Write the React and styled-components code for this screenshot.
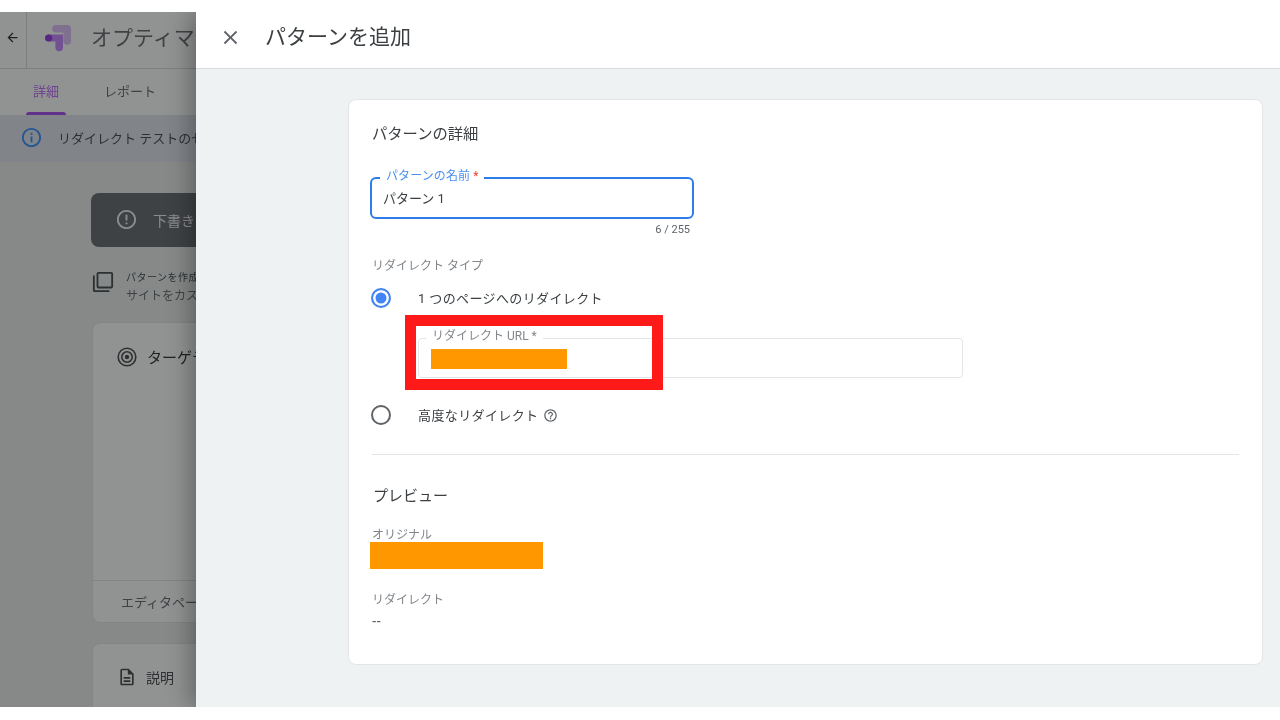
import styled, { createGlobalStyle } from "styled-components";
import {
  MdArrowBack,
  MdClose,
  MdInfoOutline,
  MdErrorOutline,
  MdFilterNone,
  MdOutlineDescription,
  MdHelpOutline,
} from "react-icons/md";

const GlobalStyle = createGlobalStyle`
  html, body {
    margin: 0;
    padding: 0;
    background: #fff;
  }
  body {
    font-family: Roboto, "Noto Sans CJK JP", sans-serif;
    color: #3c4043;
  }
  * {
    box-sizing: border-box;
  }
`;

const App = () => {
  return (
    <Slide>
      <GlobalStyle />
      <Screen>
        <BackPage>
          <TopBar>
            <BackCell>
              <MdArrowBack size={15} />
            </BackCell>
            <Logo />
            <ProductTitle>オプティマイズ</ProductTitle>
          </TopBar>
          <Tabs>
            <Tab $active>詳細</Tab>
            <Tab>レポート</Tab>
          </Tabs>
          <Banner>
            <MdInfoOutline size={23} color="#2a8aff" />
            <span>リダイレクト テストのセットアップ</span>
          </Banner>
          <BackContent>
            <DraftCard>
              <MdErrorOutline size={23} />
              <span>下書きです</span>
            </DraftCard>
            <HintRow>
              <MdFilterNone size={22} />
              <HintText>
                <b>パターンを作成してください</b>
                <span>サイトをカスタマイズします</span>
              </HintText>
            </HintRow>
            <TargetCard>
              <CardHead>
                <TargetIcon />
                <span>ターゲティング</span>
              </CardHead>
              <CardFooter>エディタページ</CardFooter>
            </TargetCard>
            <NoteCard>
              <MdOutlineDescription size={20} />
              <span>説明</span>
            </NoteCard>
          </BackContent>
          <Scrim />
        </BackPage>

        <Panel>
          <PanelHeader>
            <CloseButton>
              <MdClose size={23} />
            </CloseButton>
            <PanelTitle>パターンを追加</PanelTitle>
          </PanelHeader>
          <PanelBody>
            <Card>
              <SectionTitle>パターンの詳細</SectionTitle>
              <NameField>
                <NameLabel>
                  パターンの名前 <Required>*</Required>
                </NameLabel>
                パターン 1
              </NameField>
              <Counter>6 / 255</Counter>
              <FieldCaption>リダイレクト タイプ</FieldCaption>
              <RadioRow>
                <Radio $checked />
                <RadioText>1 つのページへのリダイレクト</RadioText>
              </RadioRow>
              <UrlField>
                <UrlLabel>リダイレクト URL *</UrlLabel>
                <UrlValue />
                <Highlight />
              </UrlField>
              <RadioRow $second>
                <Radio />
                <RadioText>高度なリダイレクト</RadioText>
                <MdHelpOutline size={15} color="#5f6368" />
              </RadioRow>
              <Divider />
              <PreviewTitle>プレビュー</PreviewTitle>
              <PreviewLabel>オリジナル</PreviewLabel>
              <OriginalValue />
              <PreviewLabel $gap>リダイレクト</PreviewLabel>
              <EmptyValue>--</EmptyValue>
            </Card>
          </PanelBody>
        </Panel>
      </Screen>
    </Slide>
  );
};

const Logo = () => (
  <LogoSvg width="27" height="27" viewBox="0 0 27 27">
    <path
      fill="#dcbcfa"
      d="M11 0H22a4 4 0 0 1 4 4V16a3.8 3.8 0 0 1-7.6 0V7.6H11a3.8 3.8 0 0 1 0-7.6z"
    />
    <path
      fill="#c080ff"
      d="M3.6 9.4H18V22.4a3.8 3.8 0 0 1-7.6 0V16.6H3.6z"
    />
    <circle cx="3.6" cy="13" r="3.6" fill="#8a2be2" />
  </LogoSvg>
);

const TargetIcon = () => (
  <svg width="20" height="20" viewBox="0 0 20 20" fill="none" stroke="#3c4043">
    <circle cx="10" cy="10" r="8.8" strokeWidth="1.6" />
    <circle cx="10" cy="10" r="5.2" strokeWidth="1.6" />
    <circle cx="10" cy="10" r="2.2" fill="#3c4043" strokeWidth="0" />
  </svg>
);

const Slide = styled.div`
  width: 1280px;
  height: 720px;
  padding: 12px 0 13px;
  background: #fff;
  overflow: hidden;
  filter: blur(0.5px);
`;

const Screen = styled.div`
  display: flex;
  height: 695px;
  overflow: hidden;
`;

const BackPage = styled.div`
  position: relative;
  flex: 0 0 196px;
  overflow: hidden;
  background: #ebeeee;
  white-space: nowrap;

  svg {
    flex: none;
  }
`;

const Scrim = styled.div`
  position: absolute;
  inset: 0;
  background: rgba(30, 32, 32, 0.49);
`;

const TopBar = styled.div`
  display: flex;
  align-items: center;
  height: 57px;
  padding-bottom: 6px;
  background: #fff;
  border-bottom: 1px solid #d6d8da;
`;

const BackCell = styled.div`
  display: flex;
  align-items: center;
  justify-content: center;
  flex: 0 0 27px;
  height: 57px;
  margin-top: 6px;
  padding: 0 2px 6px 0;
  border-right: 1px solid #d6d8da;
  color: #202124;
`;

const LogoSvg = styled.svg`
  margin: 2px 0 0 18px;
`;

const ProductTitle = styled.div`
  margin: 0 0 2px 19px;
  font-size: 21px;
  color: #5f6368;
`;

const Tabs = styled.div`
  display: flex;
  height: 46px;
  gap: 45px;
  padding-left: 33px;
  background: #fff;
`;

const Tab = styled.div`
  position: relative;
  padding-top: 12px;
  font-size: 13px;
  color: ${(p) => (p.$active ? "#bb66ff" : "#5f6368")};

  &::after {
    content: "";
    display: ${(p) => (p.$active ? "block" : "none")};
    position: absolute;
    left: -7px;
    right: -7px;
    bottom: 0;
    height: 3px;
    border-radius: 3px 3px 0 0;
    background: #a142f4;
  }
`;

const Banner = styled.div`
  display: flex;
  align-items: center;
  gap: 15px;
  height: 47px;
  padding: 0 0 2px 20px;
  background: #dfe6f0;
  font-size: 13px;
  color: #3c4043;
`;

const BackContent = styled.div`
  padding: 31px 0 0 91px;
  width: 700px;
`;

const DraftCard = styled.div`
  display: flex;
  align-items: center;
  gap: 15px;
  height: 54px;
  padding: 0 0 1px 24px;
  border-radius: 8px;
  background: #5f6368;
  color: #f1f3f4;
  font-size: 14px;
`;

const HintRow = styled.div`
  display: flex;
  align-items: flex-start;
  gap: 12px;
  margin: 22px 0 17px 1px;
  color: #3c4043;

  svg {
    margin-top: 2px;
  }
`;

const HintText = styled.div`
  display: flex;
  flex-direction: column;
  font-size: 12px;
  line-height: 18px;
  color: #5f6368;

  b {
    font-size: 10px;
    font-weight: 400;
    letter-spacing: 0.5px;
    color: #3c4043;
  }
`;

const BackCard = styled.div`
  border: 1px solid #e2e4e6;
  border-radius: 8px;
  background: #fff;
  margin-left: 1px;
`;

const TargetCard = styled(BackCard)`
  display: flex;
  flex-direction: column;
  justify-content: space-between;
  height: 301px;
`;

const CardHead = styled.div`
  display: flex;
  align-items: center;
  gap: 10px;
  padding: 23px 0 0 24px;
  font-size: 15px;
  color: #202124;
`;

const CardFooter = styled.div`
  display: flex;
  align-items: center;
  height: 42px;
  padding-left: 28px;
  border-top: 1px solid #e2e4e6;
  font-size: 13px;
  color: #5f6368;
`;

const NoteCard = styled(BackCard)`
  display: flex;
  align-items: flex-start;
  gap: 9px;
  height: 90px;
  margin-top: 20px;
  padding: 23px 0 0 24px;
  font-size: 14px;
  color: #3c4043;
`;

const Panel = styled.div`
  position: relative;
  display: flex;
  flex-direction: column;
  flex: 1;
  min-width: 0;
  box-shadow: -6px 0 22px rgba(0, 0, 0, 0.3);
`;

const PanelHeader = styled.div`
  display: flex;
  align-items: center;
  flex: 0 0 57px;
  padding: 0 0 10px 23px;
  background: #fff;
  border-bottom: 1px solid #dadce0;
`;

const CloseButton = styled.div`
  display: flex;
  margin-top: 4px;
  color: #5f6368;
`;

const PanelTitle = styled.h1`
  margin: 0 0 0 23px;
  font-size: 21px;
  font-weight: 400;
  color: #3c4043;
`;

const PanelBody = styled.div`
  flex: 1;
  padding: 30px 17px 0 152px;
  background: #eff2f3;
`;

const Card = styled.div`
  height: 566px;
  padding: 23px 23px 0;
  border: 1px solid #e3e5e8;
  border-radius: 8px;
  background: #fff;
`;

const SectionTitle = styled.h2`
  margin: 0;
  height: 22px;
  line-height: 22px;
  font-size: 15.3px;
  font-weight: 400;
  color: #3c4043;
`;

const NameField = styled.div`
  position: relative;
  display: flex;
  align-items: center;
  width: 324px;
  height: 42px;
  margin: 32px 0 0 -2px;
  padding: 0 0 2px 11px;
  border: 2px solid #2b7de9;
  border-radius: 6px;
  font-size: 13px;
  color: #3c4043;
`;

const NameLabel = styled.label`
  position: absolute;
  left: 8px;
  top: -11px;
  padding: 0 6px 0 6px;
  background: #fff;
  line-height: 16px;
  font-size: 12px;
  letter-spacing: 0.1px;
  color: #4a90f0;
`;

const Required = styled.span`
  color: #ea4335;
`;

const Counter = styled.div`
  width: 318px;
  height: 21px;
  padding-top: 1px;
  line-height: 20px;
  text-align: right;
  font-size: 11px;
  color: #5f6368;
`;

const FieldCaption = styled.div`
  margin-top: 17px;
  line-height: 18px;
  font-size: 12px;
  color: #80868b;
`;

const RadioRow = styled.div`
  display: flex;
  align-items: center;
  height: 20px;
  margin-top: ${(p) => (p.$second ? "27px" : "13px")};
  font-size: 13px;
  color: #3c4043;

  svg {
    margin-left: 5px;
  }
`;

const Radio = styled.span`
  flex: none;
  width: 20px;
  height: 20px;
  margin-left: -1px;
  border-radius: 50%;
  border: 2px solid ${(p) => (p.$checked ? "#4285f4" : "#5f6368")};
  background: ${(p) => (p.$checked ? "#4285f4" : "#fff")};
  box-shadow: inset 0 0 0 2.5px #fff;
`;

const RadioText = styled.span`
  margin: 0 0 2px 27px;
  letter-spacing: 0.38px;
`;

const UrlField = styled.div`
  position: relative;
  width: 545px;
  height: 40px;
  margin: 30px 0 0 46px;
  border: 1px solid #e3e5e8;
  border-radius: 4px;
`;

const UrlLabel = styled.label`
  position: absolute;
  left: 7px;
  top: -11px;
  padding: 0 6px;
  background: #fff;
  line-height: 16px;
  font-size: 12px;
  color: #80868b;
`;

const UrlValue = styled.div`
  position: absolute;
  left: 12px;
  top: 10px;
  width: 136px;
  height: 20px;
  background: #ff9800;
`;

const Highlight = styled.div`
  position: absolute;
  left: -14px;
  top: -24px;
  width: 258px;
  height: 75px;
  border: 11px solid #ff1a1a;
`;

const Divider = styled.div`
  height: 1px;
  margin-top: 29px;
  background: #e3e5e8;
`;

const PreviewTitle = styled.h2`
  margin: 30px 0 0 1px;
  height: 22px;
  line-height: 22px;
  font-size: 15px;
  font-weight: 400;
  color: #3c4043;
`;

const PreviewLabel = styled.div`
  margin-top: ${(p) => (p.$gap ? "22px" : "19px")};
  height: ${(p) => (p.$gap ? "18px" : "16px")};
  line-height: 18px;
  font-size: 12px;
  color: #80868b;
`;

const OriginalValue = styled.div`
  width: 173px;
  height: 27px;
  margin-left: -2px;
  background: #ff9800;
`;

const EmptyValue = styled.div`
  margin-top: 4px;
  line-height: 18px;
  font-size: 13px;
  font-weight: 500;
  color: #5f6368;
`;

export default App;
